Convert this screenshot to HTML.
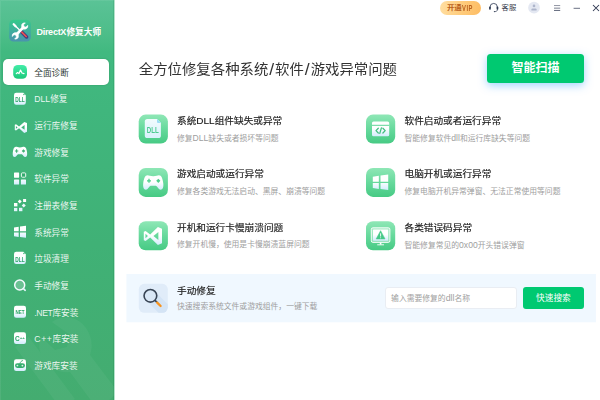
<!DOCTYPE html>
<html lang="zh-CN">
<head>
<meta charset="utf-8">
<title>DirectX修复大师</title>
<style>
*{box-sizing:border-box;margin:0;padding:0}
html,body{width:600px;height:400px;overflow:hidden;background:#fff}
body{font-family:"Liberation Sans","Noto Sans CJK SC",sans-serif;position:relative;color:#333}
.abs{position:absolute}
#side{position:absolute;left:0;top:0;width:114px;height:400px;overflow:hidden;
 background:linear-gradient(180deg,#5ac396 0px,#55c091 14px,#4ebe8a 32px,#41b980 52px,#40b67d 110px,#40b176 244px,#44ac70 400px)}
#side:before{content:"";position:absolute;left:0;top:0;width:114px;height:400px;box-shadow:inset 1px 1px 0 rgba(255,255,255,.07),inset -1px 0 0 rgba(0,90,40,.13)}
#edge{position:absolute;left:114px;top:0;width:1px;height:400px;background:#b4e2cb}
#brand{position:absolute;left:36.4px;top:24.8px;height:14px;line-height:14px;font-size:8.67px;font-weight:bold;color:#fff;white-space:nowrap}
#brand b{font-size:9.1px;letter-spacing:-.3px;margin-right:.3px}
#active{position:absolute;left:3px;top:58.8px;width:106.4px;height:26.4px;border-radius:5px;background:#fff;box-shadow:0 0 1.5px rgba(0,70,30,.35)}
.mi{position:absolute;left:34.3px;height:14px;line-height:14px;font-size:8.67px;color:rgba(255,255,255,.9);white-space:nowrap}
.mi.on{color:#2d3a33}
.mi .n{letter-spacing:-.4px}
.mi .c{letter-spacing:.6px}
#h1{position:absolute;left:138.8px;top:56.6px;height:24px;line-height:24px;font-size:14.4px;color:#333;white-space:nowrap}
#h1{transform:scaleY(.95);transform-origin:0 19.5px}
#h1 i{font-style:normal;font-size:17.5px;line-height:1px;padding:0 .95px;position:relative;top:.8px}
#scan{position:absolute;left:487px;top:54px;width:97px;height:29px;border-radius:3.5px;background:#00c971;color:#fff;font-weight:bold;font-size:12px;line-height:29px;text-align:center;box-shadow:0 2.5px 8px rgba(70,170,255,.5)}
.ct{position:absolute;height:14px;line-height:14px;font-size:9.66px;color:#222;white-space:nowrap}
.ct{transform:scaleY(.92);transform-origin:0 11.4px;-webkit-text-stroke:.18px #222}
.ct b{font-weight:normal;font-size:10px}
.cd b{font-weight:normal;font-size:8.6px}
.cd{position:absolute;height:12px;line-height:12px;font-size:7.8px;color:#9e9e9e;white-space:nowrap}
#panel{position:absolute;left:126px;top:274px;width:470px;height:49px;overflow:hidden}
#inp{position:absolute;left:385.3px;top:287px;width:131.7px;height:22.2px;border:1px solid #e9edf3;border-radius:3px;background:#fff;font-size:7.8px;line-height:20.8px;color:#a0a0a0;padding-left:4.8px;white-space:nowrap}
#inp b{font-weight:normal;font-size:8.8px}
#sbtn{position:absolute;left:523px;top:287px;width:60.8px;height:22.4px;border-radius:3px;background:#00c971;color:#fff;font-size:8.67px;line-height:22.4px;text-align:center}
#vip{position:absolute;left:439.9px;top:.7px;width:41.2px;height:13.9px;border-radius:7px;background:linear-gradient(100deg,#ffdfa3 0%,#ffcd7e 50%,#fdbc63 100%);color:#b9601c;white-space:nowrap;font-weight:bold}
#vip span{position:absolute;top:0;height:13.9px;line-height:13.9px}
#vip .a{left:7.1px;font-size:7.33px}
#vip .b{left:21.8px;font-size:8.4px;letter-spacing:.7px;transform:scaleX(.7);transform-origin:0 50%;line-height:14.3px}
#kf{position:absolute;left:501.6px;top:1.9px;height:12px;line-height:12px;font-size:7.33px;color:#3a4150;white-space:nowrap}
#ov{position:absolute;left:0;top:0;width:600px;height:400px;pointer-events:none}
#ov text{font-family:"Liberation Sans",sans-serif;font-weight:bold}
</style>
</head>
<body>
<div id="side">
  <svg class="abs" style="left:0;top:300px" width="115" height="100" viewBox="0 300 115 100">
    <g opacity=".04" fill="#fff" stroke="#fff">
      <path d="M52 322 a24 24 0 0 1 34 6 c6 9 7 18 4 27 L118 392 L98 410 L70 372 c-10 1 -19 -3 -25 -10 c-6 -8 -7 -17 -4 -25 l14 13 l12 -3 l3 -12 Z" stroke="none"/>
      <path d="M22 342 L68 404" stroke-width="17" fill="none"/>
    </g>
  </svg>
  <div id="brand"><b>DirectX</b>修复大师</div>
  <div id="active"></div>
  <div class="mi on" style="top:65.50px">全面诊断</div>
  <div class="mi" style="top:92.17px">DLL修复</div>
  <div class="mi" style="top:118.83px">运行库修复</div>
  <div class="mi" style="top:145.50px">游戏修复</div>
  <div class="mi" style="top:172.17px">软件异常</div>
  <div class="mi" style="top:198.84px">注册表修复</div>
  <div class="mi" style="top:225.50px">系统异常</div>
  <div class="mi" style="top:252.17px">垃圾清理</div>
  <div class="mi" style="top:278.84px">手动修复</div>
  <div class="mi" style="top:305.50px"><span class="n">.NET</span>库安装</div>
  <div class="mi" style="top:332.17px"><span class="c">C++</span>库安装</div>
  <div class="mi" style="top:358.84px">游戏库安装</div>
</div>
<div id="edge"></div>
<div id="vip"><span class="a">开通</span><span class="b">VIP</span></div>
<div id="kf">客服</div>
<div id="h1">全方位修复各种系统<i>/</i>软件<i>/</i>游戏异常问题</div>
<div id="scan">智能扫描</div>
<div id="panel"><svg width="470" height="49" viewBox="126 274 470 49" style="display:block"><rect x="126.4" y="274" width="469.5" height="48.3" fill="#f0f8ff"/></svg></div>
<div class="ct" style="left:177px;top:114.1px">系统<b>DLL</b>组件缺失或异常</div>
<div class="cd" style="left:177px;top:132.4px">修复<b>DLL</b>缺失或者损坏等问题</div>
<div class="ct" style="left:404.5px;top:114.1px">软件启动或者运行异常</div>
<div class="cd" style="left:404.5px;top:132.4px">智能修复软件<b>dll</b>和运行库缺失等问题</div>
<div class="ct" style="left:177px;top:167.43px">游戏启动或运行异常</div>
<div class="cd" style="left:177px;top:185.73px">修复各类游戏无法启动、黑屏、崩溃等问题</div>
<div class="ct" style="left:404.5px;top:167.43px">电脑开机或运行异常</div>
<div class="cd" style="left:404.5px;top:185.73px">修复电脑开机异常弹窗、无法正常使用等问题</div>
<div class="ct" style="left:177px;top:220.77px">开机和运行卡慢崩溃问题</div>
<div class="cd" style="left:177px;top:239.07px">修复开机慢，使用是卡慢崩溃蓝屏问题</div>
<div class="ct" style="left:404.5px;top:220.77px">各类错误码异常</div>
<div class="cd" style="left:404.5px;top:239.07px">智能修复常见的<b>0x00</b>开头错误弹窗</div>
<div class="ct" style="left:177px;top:283.5px">手动修复</div>
<div class="cd" style="left:177px;top:301.4px">快速搜索系统文件或游戏组件，一键下载</div>
<div id="inp">输入需要修复的<b>dll</b>名称</div>
<div id="sbtn">快速搜索</div>
<svg id="ov" viewBox="0 0 600 400" width="600" height="400">
<defs>
  <filter id="nf" x="-10%" y="-30%" width="120%" height="160%" color-interpolation-filters="sRGB"><feOffset dx="0" dy="0"/></filter>
  <linearGradient id="wg" x1="0" y1="0" x2="0" y2="1"><stop offset="0" stop-color="#fff"/><stop offset=".45" stop-color="#fff"/><stop offset="1" stop-color="#d2ecfd"/></linearGradient>
  <linearGradient id="wg2" x1="0" y1="0" x2="0" y2="1"><stop offset="0" stop-color="#f1fbfd"/><stop offset="1" stop-color="#d8f1fc"/></linearGradient>
  <linearGradient id="cg" x1="0" y1="0" x2="0" y2="1"><stop offset="0" stop-color="#8fe7b6"/><stop offset=".5" stop-color="#66d99c"/><stop offset="1" stop-color="#47ca84"/></linearGradient>
  <linearGradient id="pg" x1="0" y1="0" x2="0" y2="1"><stop offset="0" stop-color="#43eda8"/><stop offset="1" stop-color="#1cc87a"/></linearGradient>
  <linearGradient id="lg" x1="0" y1="0" x2="0" y2="1"><stop offset="0" stop-color="#35ca8b"/><stop offset="1" stop-color="#4a93ae"/></linearGradient>
  <path id="vs" d="M15.5 0 L20 2 V18 L15.5 20 L7 11.6 L2 15.6 L0 14.6 V5.4 L2 4.4 L7 8.4 Z M16 5.6 L10.6 10 L16 14.4 Z M1.8 7.4 L4.6 10 L1.8 12.6 Z" fill-rule="evenodd"/>
  <path id="pad" d="M22 0 C30 0 36 5 50 5 C64 5 70 0 78 0 C90 0 96 16 99 40 C101 58 96 70 86 70 C76 70 72 56 63 51 L37 51 C28 56 24 70 14 70 C4 70 -1 58 1 40 C4 16 10 0 22 0 Z"/>
  <g id="win">
    <path d="M0 1.65 L4.7 1 V5.5 H0 Z M6 .8 L12 0 V5.5 H6 Z M0 6.6 H4.7 V11.1 L0 10.4 Z M6 6.6 H12 V12 L6 11.2 Z"/>
  </g>
</defs>

<!-- logo -->
<rect x="9.1" y="19.8" width="21.8" height="21.8" rx="4.6" fill="url(#lg)"/>
<g>
  <path d="M14.6 25.2 L20.6 31" stroke="#fff" stroke-width="1.3" stroke-linecap="round"/>
  <path d="M13.7 24.3 L15.6 26.2" stroke="#fff" stroke-width="2.3" stroke-linecap="round"/>
  <path d="M20.9 31.2 L26.6 36.9" stroke="#453c7c" stroke-width="3.5" stroke-linecap="round"/>
  <path d="M21.8 32.1 L26.2 36.5" stroke="#f2504f" stroke-width="1.5" stroke-linecap="round"/>
  <path d="M16.6 34.4 L23.6 27.1" stroke="#fff" stroke-width="2.8"/>
  <g transform="translate(-.4 -.5)"><path d="M22 25.2 a3.3 3.3 0 0 1 3.8 -1.8 l-1.8 1.9 l.5 1.8 l1.8 .5 l1.9 -1.8 a3.3 3.3 0 0 1 -6.2 2.1 Z" fill="#fff" stroke="#fff" stroke-width=".5" stroke-linejoin="round"/></g>
  <g transform="translate(1.4 -.2)"><path d="M17 37.4 a3.3 3.3 0 0 1 -3.8 1.8 l1.8 -1.9 l-.5 -1.8 l-1.8 -.5 l-1.9 1.8 a3.3 3.3 0 0 1 6.2 -2.1 Z" fill="#fff" stroke="#fff" stroke-width=".5" stroke-linejoin="round"/></g>
</g>

<!-- 1 pulse -->
<rect x="13.2" y="65" width="13.8" height="13.8" rx="4.6" fill="url(#pg)"/>
<path d="M16.3 73.6 L17.6 72.5 L19 73.6 L20.5 70 L22 73 L24 73.6" fill="none" stroke="#fff" stroke-width="1.2" stroke-linejoin="round" stroke-linecap="round"/>

<!-- 2 dll -->
<path d="M16.2 92.8 H23.4 L25.8 95.2 V102.6 a2.2 2.2 0 0 1 -2.2 2.2 H16.2 a2.2 2.2 0 0 1 -2.2 -2.2 V95 a2.2 2.2 0 0 1 2.2 -2.2 Z" fill="url(#wg)"/>
<circle cx="23.9" cy="94.5" r=".7" fill="#35b073"/>
<text x="15.2" y="102" font-size="6.9" fill="#27a566" textLength="9.4" lengthAdjust="spacingAndGlyphs" filter="url(#nf)">DLL</text>

<!-- 3 vs -->
<use href="#vs" transform="translate(14.8 121.9) scale(.61 .55)" fill="url(#wg)"/>

<!-- 4 gamepad -->
<use href="#pad" transform="translate(12.6 146.8) scale(.1465 .1457)" fill="url(#wg)"/>
<path d="M16.6 149.3 v3.4 M14.9 151 h3.4" stroke="#3fb177" stroke-width="1.1" fill="none"/>
<path d="M23.5 149.2 L25.3 151 L23.5 152.8 L21.7 151 Z" fill="#3fb177"/>

<!-- 5 grid -->
<path d="M14.4 172.6 h4.3 a.4 .4 0 0 1 .4 .4 v4.3 a.4 .4 0 0 1 -.4 .4 h-4.3 a.4 .4 0 0 1 -.4 -.4 v-4.3 a.4 .4 0 0 1 .4 -.4 Z M14.4 179.5 h4.3 a.4 .4 0 0 1 .4 .4 v4.3 a.4 .4 0 0 1 -.4 .4 h-4.3 a.4 .4 0 0 1 -.4 -.4 v-4.3 a.4 .4 0 0 1 .4 -.4 Z M21.3 179.5 h4.3 a.4 .4 0 0 1 .4 .4 v4.3 a.4 .4 0 0 1 -.4 .4 h-4.3 a.4 .4 0 0 1 -.4 -.4 v-4.3 a.4 .4 0 0 1 .4 -.4 Z" fill="url(#wg)"/>
<rect x="21.4" y="172.9" width="4.3" height="4.3" rx=".9" fill="#1f9a5c" fill-opacity=".35" stroke="#eefaf4" stroke-width="1"/>

<!-- 6 registry -->
<g fill="#fff">
  <rect x="23.1" y="199" width="3" height="3"/>
  <rect x="18.35" y="200.05" width="2.8" height="2.8" transform="rotate(45 19.75 201.45)"/>
  <rect x="14" y="203" width="3.4" height="3.4"/>
  <rect x="22.35" y="204.1" width="2.8" height="2.8" transform="rotate(45 23.75 205.5)" fill="#eef8fe"/>
  <rect x="14" y="207.9" width="3.3" height="3.3" fill="#e2f3fd"/>
  <rect x="19" y="207.8" width="3.4" height="3.4" fill="#e2f3fd"/>
</g>

<!-- 7 windows -->
<use href="#win" transform="translate(14 225.8)" fill="url(#wg)"/>

<!-- 8 dll -->
<path d="M16.2 251.8 H23.4 L25.8 254.2 V261.8 a2.2 2.2 0 0 1 -2.2 2.2 H16.2 a2.2 2.2 0 0 1 -2.2 -2.2 V254 a2.2 2.2 0 0 1 2.2 -2.2 Z" fill="url(#wg)"/>
<circle cx="23.9" cy="253.5" r=".7" fill="#35b073"/>
<text x="15.2" y="262.2" font-size="6.9" fill="#27a566" textLength="9.4" lengthAdjust="spacingAndGlyphs" filter="url(#nf)">DLL</text>

<!-- 9 magnifier -->
<circle cx="19.7" cy="285" r="5" fill="#fff" fill-opacity=".22" stroke="#f4fbff" stroke-width="1.5"/>
<path d="M23.5 288.7 L25.2 290.3" stroke="#e6f5fd" stroke-width="1.6" stroke-linecap="round"/>

<!-- 10 NET -->
<rect x="14" y="305.8" width="12" height="12" rx="2.2" fill="url(#wg)"/>
<text x="15.4" y="313.6" font-size="4.9" fill="#27a566" textLength="9" lengthAdjust="spacingAndGlyphs" filter="url(#nf)">NET</text>

<!-- 11 C++ -->
<rect x="14" y="332.2" width="12" height="11.8" rx="2.2" fill="url(#wg)"/>
<text x="15.1" y="340.5" font-size="6.5" fill="#27a566" filter="url(#nf)">C<tspan font-size="4" dx="-.1" dy="-1.1" textLength="5.2" lengthAdjust="spacingAndGlyphs">++</tspan></text>

<!-- 12 game box -->
<rect x="14" y="359.2" width="12" height="11.8" rx="2.2" fill="url(#wg)"/>
<rect x="15" y="363.2" width="10" height="4.7" rx="2.35" fill="#35ae6f"/>
<path d="M20 363.4 C20.3 361.8 21.3 361 22.6 360.6" fill="none" stroke="#35ae6f" stroke-width=".9" stroke-linecap="round"/>
<path d="M17.4 364.7 v1.7 M16.5 365.55 h1.8" stroke="#fff" stroke-width=".6"/>
<circle cx="22.4" cy="365.55" r=".9" fill="#dff5ea"/>

<!-- card backgrounds -->
<g fill="url(#cg)">
  <rect x="138.7" y="114.6" width="29.2" height="29" rx="7"/>
  <rect x="138.7" y="167.9" width="29.2" height="29" rx="7"/>
  <rect x="138.7" y="221.2" width="29.2" height="29" rx="7"/>
  <rect x="366" y="114.6" width="29.2" height="29" rx="7"/>
  <rect x="366" y="167.9" width="29.2" height="29" rx="7"/>
  <rect x="366" y="221.2" width="29.2" height="29" rx="7"/>
</g>

<!-- card 1: dll doc -->
<path d="M147.4 118.9 H157 L160.9 122.8 V135.5 a2.6 2.6 0 0 1 -2.6 2.6 H147.4 a2.6 2.6 0 0 1 -2.6 -2.6 V121.5 a2.6 2.6 0 0 1 2.6 -2.6 Z" fill="url(#wg2)"/>
<path d="M157 119 L161 123 H158 a1 1 0 0 1 -1 -1 Z" fill="#9adcf6"/>
<text x="146.7" y="132.8" font-size="8.3" fill="#4ccb90" textLength="12" lengthAdjust="spacingAndGlyphs" filter="url(#nf)">DLL</text>

<g transform="translate(0 .3)"><!-- card 3: gamepad -->
<use href="#pad" transform="translate(143 175) scale(.205 .207)" fill="url(#wg)"/>
<path d="M149 178.5 v4 M147 180.5 h4" stroke="#4ccf8d" stroke-width="1.3" fill="none"/>
<path d="M158.3 178.4 L160.4 180.5 L158.3 182.6 L156.2 180.5 Z" fill="#4ccf8d"/>

</g><g transform="translate(0 .5)"><!-- card 5: vs -->
<use href="#vs" transform="translate(143.8 226.5) scale(.91 .9)" fill="url(#wg)"/>

</g><!-- card 2: code window -->
<rect x="372" y="121.5" width="17.2" height="14.8" rx="1.6" fill="url(#wg)"/>
<path d="M372 125.3 H389.2" stroke="#5fd597" stroke-width="1"/>
<path d="M378.3 128.2 L376 130.6 L378.3 133 M382.9 128.2 L385.2 130.6 L382.9 133 M381.4 127.8 L379.8 133.4" fill="none" stroke="#3fbf80" stroke-width="1.25" stroke-linecap="round" stroke-linejoin="round"/>

<g transform="translate(0 .3)"><!-- card 4: windows -->
<use href="#win" transform="translate(372.8 174.2) scale(1.285 1.3)" fill="url(#wg)"/>

</g><g transform="translate(0 .5)"><!-- card 6: monitor -->
<rect x="371.3" y="227.3" width="18.6" height="14.6" rx="1.6" fill="#fff" fill-opacity=".35" stroke="#fff" stroke-width=".9"/>
<rect x="373" y="229" width="15.2" height="11.2" rx=".6" fill="url(#wg)"/>
<path d="M380.6 230.2 L385 238.4 H376.2 Z" fill="#46c988" stroke="#46c988" stroke-width=".6" stroke-linejoin="round"/>
<path d="M380.6 232.8 V236" stroke="#fff" stroke-width=".9"/>
<circle cx="380.6" cy="237.3" r=".5" fill="#fff"/>
<path d="M380.6 242 V244" stroke="#fff" stroke-width="1.6"/>
<path d="M377.6 244.3 H383.6" stroke="#fff" stroke-width=".9" stroke-linecap="round"/>

</g><!-- manual repair icon -->
<rect x="138.8" y="283.8" width="29" height="29" rx="5.5" fill="#e0ecf9"/>
<path d="M146 300.2 L154.9 291.3 L167.8 304.2 V307.3 a5.5 5.5 0 0 1 -5.5 5.5 H158.6 Z" fill="#d4e4f5"/>
<circle cx="150.4" cy="295.8" r="6.35" fill="#d9e7f6" stroke="#384454" stroke-width="1.6"/>
<path d="M155 300.4 L157 302.4" stroke="#384454" stroke-width="1.7"/>
<path d="M157.2 302.6 L160.6 306" stroke="#f7931e" stroke-width="2.3" stroke-linecap="round"/>

<!-- top bar -->
<g fill="none" stroke="#2b3650">
  <path d="M490 8 V7.3 a3.7 3.9 0 0 1 7.4 0 V8" stroke-width=".8"/>
  <path d="M497.4 9.4 C497.4 11 496.4 11.6 494.8 11.6" stroke-width=".7"/>
</g>
<rect x="489.1" y="6.6" width="1.7" height="3.2" rx=".8" fill="#2b3650"/>
<rect x="496.6" y="6.6" width="1.7" height="3.2" rx=".8" fill="#2b3650"/>
<circle cx="494.4" cy="11.6" r=".6" fill="#2b3650"/>
<circle cx="534" cy="7.65" r="5.85" fill="#e4e8f2"/>
<circle cx="534" cy="5.9" r="1.3" fill="#adb5cb"/>
<path d="M531.4 10.5 V9.6 a1.2 1.2 0 0 1 1.2 -1.2 H535.4 a1.2 1.2 0 0 1 1.2 1.2 V10.5 Z" fill="#adb5cb"/>
<g stroke="#2f3852" stroke-width=".75" fill="none">
  <path d="M554 5.55 H560.2" stroke-opacity=".7"/>
  <path d="M554 8.15 H560.2" stroke-opacity=".85"/>
  <path d="M554 10.45 H560.2"/>
  <path d="M573.6 8.3 H580" stroke-width=".8" stroke-opacity=".9"/>
  <path d="M593 5 L599 11 M599 5 L593 11" stroke-width="1.05"/>
</g>
</svg>
</body>
</html>
